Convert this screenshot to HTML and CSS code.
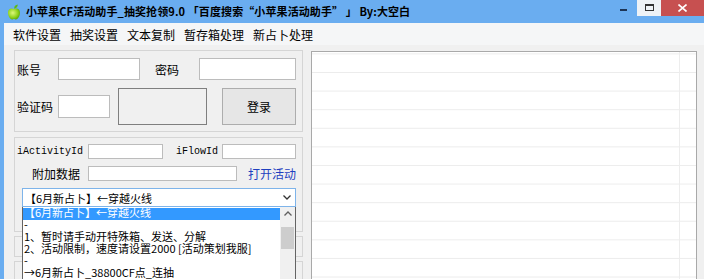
FILE: index.html
```html
<!DOCTYPE html>
<html>
<head>
    <meta charset="utf-8">
    <title>小苹果CF活动助手</title>
    <link rel="stylesheet" href="styles.css">
</head>
<body>
<div class="window">
    <div class="titlebar">
        <svg class="app-icon" viewBox="0 0 14 16" width="14" height="16">
            <defs>
                <radialGradient id="ap" cx="40%" cy="40%" r="70%">
                    <stop offset="0" stop-color="#dcf77a"/>
                    <stop offset="0.6" stop-color="#8fd21c"/>
                    <stop offset="1" stop-color="#4e9a06"/>
                </radialGradient>
            </defs>
            <path d="M7 5.2 C5.5 4 1 3.8 1 8.8 C1 12.5 3.5 15.5 5 15.5 C6 15.5 6.2 15 7 15 C7.8 15 8 15.5 9 15.5 C10.5 15.5 13 12.5 13 8.8 C13 3.8 8.5 4 7 5.2 Z" fill="url(#ap)"/>
            <path d="M7.2 4.8 C7 2.5 8.5 0.8 10.8 0.6 C10.8 2.8 9.4 4.4 7.2 4.8 Z" fill="#5cb815"/>
        </svg>
        <span class="title">小苹果CF活动助手_抽奖抢领9.0 「百度搜索“小苹果活动助手” 」 By:大空白</span>
        <div class="caption-buttons">
            <div class="btn-min"><span></span></div>
            <div class="btn-max"><span></span></div>
            <div class="btn-close">
                <svg width="9" height="8" viewBox="0 0 9 8">
                    <path d="M0.5 0.5 L8.5 7.5 M8.5 0.5 L0.5 7.5" stroke="#fff" stroke-width="1.6"/>
                </svg>
            </div>
        </div>
    </div>

    <div class="frame">
        <div class="menubar">
            <span>软件设置</span>
            <span>抽奖设置</span>
            <span>文本复制</span>
            <span>暂存箱处理</span>
            <span>新占卜处理</span>
        </div>

        <div class="client">
            <div class="left">
                <div class="group login-box">
                    <div class="row row-top">
                        <span class="lbl">账号</span>
                        <input type="text" class="tb user">
                        <span class="lbl lbl-pwd">密码</span>
                        <input type="password" class="tb pwd">
                    </div>
                    <div class="row row-code">
                        <span class="lbl">验证码</span>
                        <input type="text" class="tb code">
                        <div class="captcha"></div>
                        <button class="login-btn">登录</button>
                    </div>
                </div>

                <div class="group activity-box">
                    <div class="row row-ids">
                        <span class="lbl-mono act">iActivityId</span>
                        <input type="text" class="tb small act-id">
                        <span class="lbl-mono flow">iFlowId</span>
                        <input type="text" class="tb small flow-id">
                    </div>
                    <div class="row row-extra">
                        <span class="lbl-extra">附加数据</span>
                        <input type="text" class="tb small extra">
                        <a class="open-link" href="#">打开活动</a>
                    </div>
                    <div class="combo">
                        <span>【6月新占卜】←穿越火线</span>
                        <svg class="chev" width="8" height="5" viewBox="0 0 8 5">
                            <polyline points="0.5,0.5 4,4 7.5,0.5" fill="none" stroke="#333" stroke-width="1.3"/>
                        </svg>
                    </div>

                    <div class="droplist">
                        <div class="items">
                            <div class="item selected">【6月新占卜】←穿越火线</div>
                            <div class="item">-</div>
                            <div class="item">1、暂时请手动开特殊箱、发送、分解</div>
                            <div class="item">2、活动限制，速度请设置2000 [活动策划我服]</div>
                            <div class="item">-</div>
                            <div class="item">→6月新占卜_38800CF点_连抽</div>
                        </div>
                        <div class="vscroll">
                            <svg class="up" width="8" height="5" viewBox="0 0 8 5">
                                <polyline points="0.5,4.5 4,1 7.5,4.5" fill="none" stroke="#606060" stroke-width="1.3"/>
                            </svg>
                            <div class="thumb"></div>
                        </div>
                    </div>
                </div>

                <div class="group lower-box"></div>
                <div class="group lower-box"></div>
            </div>

            <div class="grid"></div>
        </div>
    </div>
</div>
</body>
</html>
```

FILE: styles.css
```css
body {
    margin: 0;
    padding: 0;
    font-family: "Noto Sans CJK SC", "Microsoft YaHei", sans-serif;
    font-size: 12px;
    color: #000;
    background: #f0f0f0;
    overflow: hidden;
}
.window {
    width: 704px;
    height: 279px;
    display: flex;
    flex-direction: column;
    overflow: hidden;
}
.titlebar {
    height: 23px;
    flex-shrink: 0;
    background: #6aadf0;
    display: flex;
    align-items: center;
}
.app-icon {
    margin-left: 7px;
}
.title {
    margin-left: 5px;
    font-weight: bold;
    font-size: 11px;
    letter-spacing: 0.1px;
    white-space: nowrap;
    line-height: 23px;
}
.caption-buttons {
    margin-left: auto;
    align-self: flex-start;
    display: flex;
    height: 16px;
}
.btn-min {
    width: 27px;
    display: flex;
    justify-content: center;
}
.btn-min span {
    margin-top: 9px;
    width: 7px;
    height: 2px;
    background: #1d3557;
}
.btn-max {
    width: 24px;
    background: #eef2f6;
    display: flex;
    justify-content: center;
}
.btn-max span {
    margin-top: 4px;
    width: 9px;
    height: 7px;
    box-sizing: border-box;
    border: 1px solid #333;
    border-top-width: 2px;
}
.btn-close {
    width: 43px;
    background: #c75050;
    display: flex;
    justify-content: center;
    align-items: center;
}
.frame {
    flex: 1;
    display: flex;
    flex-direction: column;
    border-left: 4px solid #6aadf0;
    min-height: 0;
}
.menubar {
    height: 22px;
    flex-shrink: 0;
    background: #f5f6f7;
    display: flex;
    align-items: center;
    gap: 9px;
    padding-left: 9px;
}
.client {
    flex: 1;
    display: flex;
    background: #f0f0f0;
    min-height: 0;
}
.left {
    width: 307px;
    flex-shrink: 0;
}
.group {
    box-sizing: border-box;
    width: 289px;
    margin-left: 10px;
    border: 1px solid #d5d5d5;
}
.row {
    display: flex;
    align-items: center;
}
.tb {
    box-sizing: border-box;
    margin: 0;
    padding: 0;
    border: 1px solid #bcbcbc;
    background: #fff;
    height: 22px;
}

/* login group */
.login-box {
    margin-top: 5px;
    height: 82px;
    padding: 7px 0 0 2px;
}
.row-top {
    height: 22px;
}
.lbl {
    width: 41px;
}
.lbl-pwd {
    margin-left: 15px;
    width: 44px;
}
.user {
    width: 82px;
}
.pwd {
    width: 97px;
}
.row-code {
    margin-top: 8px;
    height: 37px;
}
.code {
    width: 52px;
    height: 23px;
}
.captcha {
    margin-left: 8px;
    width: 89px;
    height: 37px;
    box-sizing: border-box;
    border: 1px solid #7f7f7f;
}
.login-btn {
    margin-left: 15px;
    width: 74px;
    height: 37px;
    box-sizing: border-box;
    border: 1px solid #adadad;
    background: #e6e6e6;
    font-family: "Noto Sans CJK SC", sans-serif;
    font-size: 12px;
    padding: 0;
}

/* activity group */
.activity-box {
    position: relative;
    margin-top: 5px;
    height: 95px;
    padding: 6px 0 0 2px;
}
.row-ids, .row-extra {
    height: 15px;
}
.row-extra {
    margin-top: 7px;
}
.small {
    height: 15px;
}
.lbl-mono {
    font-family: "Liberation Mono", monospace;
    font-size: 10px;
}
.act {
    width: 71px;
}
.flow {
    margin-left: 13px;
    width: 46px;
}
.act-id {
    width: 75px;
}
.flow-id {
    width: 74px;
}
.lbl-extra {
    width: 63px;
    padding-right: 8px;
    text-align: right;
}
.extra {
    width: 149px;
}
.open-link {
    margin-left: 11px;
    color: #1f3fbf;
    text-decoration: none;
}
.combo {
    margin: 7px 0 0 5px;
    width: 274px;
    height: 19px;
    box-sizing: border-box;
    border: 1px solid #7eb4ea;
    background: #fff;
    display: flex;
    align-items: center;
    padding-left: 2px;
    font-size: 11px;
}
.chev {
    margin-left: auto;
    margin-right: 4px;
}
.droplist {
    position: absolute;
    left: 7px;
    top: 69px;
    width: 274px;
    height: 90px;
    box-sizing: border-box;
    border: 1px solid #646464;
    border-top: none;
    background: #fff;
    display: flex;
    z-index: 2;
}
.items {
    flex: 1;
    font-size: 11px;
    padding-top: 1px;
}
.item {
    height: 12px;
    line-height: 9px;
    padding-left: 1px;
    white-space: nowrap;
}
.item.selected {
    background: #3399ff;
    color: #fff;
}
.vscroll {
    width: 15px;
    background: #f0f0f0;
    display: flex;
    flex-direction: column;
    align-items: center;
}
.up {
    margin-top: 4px;
}
.thumb {
    margin-top: 11px;
    width: 13px;
    height: 22px;
    background: #cdcdcd;
}
.lower-box {
    margin-top: 4px;
    height: 21px;
}

/* result list */
.grid {
    margin-top: 6px;
    width: 386px;
    height: 240px;
    box-sizing: border-box;
    border: 1px solid #a9a9a9;
    border-bottom: none;
    background-color: #fff;
    background-image:
        linear-gradient(to right, transparent 367px, #ededed 367px, #ededed 368px, transparent 368px),
        linear-gradient(to bottom, transparent 17.6px, #ececec 17.6px, #ececec 18.6px);
    background-size: 100% 100%, 100% 18.6px;
    background-repeat: no-repeat, repeat-y;
    background-position: 0 0, 0 2.4px;
}
```
